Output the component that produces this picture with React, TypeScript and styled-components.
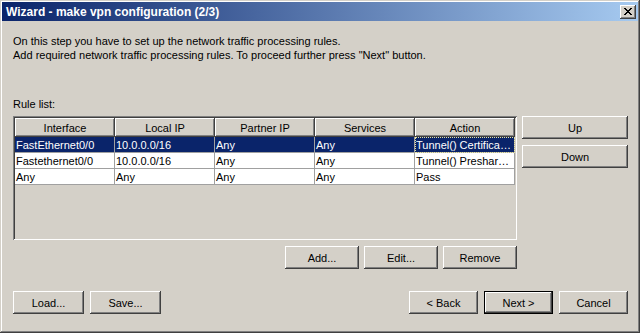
import React from "react";
import styled, { createGlobalStyle, css } from "styled-components";

const GlobalStyle = createGlobalStyle`
  html, body {
    margin: 0;
    padding: 0;
    background: #d4d0c8;
  }
  * {
    box-sizing: border-box;
  }
`;

const raised = css`
  box-shadow: inset -1px -1px #404040, inset 1px 1px #ffffff,
    inset -2px -2px #808080, inset 2px 2px #d4d0c8;
`;

const Window = styled.div`
  width: 640px;
  height: 333px;
  padding: 2px;
  background: #d4d0c8;
  font-family: "Liberation Sans", Arial, sans-serif;
  font-size: 11px;
  color: #000;
  display: flex;
  flex-direction: column;
  box-shadow: inset -1px -1px #404040, inset 1px 1px #d4d0c8,
    inset -2px -2px #808080, inset 2px 2px #ffffff;
`;

const TitleBar = styled.div`
  height: 19px;
  display: flex;
  align-items: center;
  justify-content: space-between;
  padding: 0 2px 0 4px;
  background: linear-gradient(90deg, #0a246a 0%, #a6caf0 100%);
`;

const Title = styled.span`
  color: #fff;
  font-weight: bold;
  font-size: 12px;
  white-space: nowrap;
`;

const CloseButton = styled.button`
  width: 16px;
  height: 14px;
  padding: 0;
  border: none;
  background: #d4d0c8;
  display: flex;
  align-items: center;
  justify-content: center;
  ${raised}
`;

const Body = styled.div`
  flex: 1;
  display: flex;
  flex-direction: column;
  padding: 13px 10px 0 11px;
`;

const Intro = styled.p`
  margin: 0;
  line-height: 14px;
`;

const RuleLabel = styled.div`
  margin-top: 35px;
  line-height: 14px;
`;

const MainRow = styled.div`
  margin-top: 5px;
  display: flex;
  gap: 5px;
`;

const TableColumn = styled.div`
  display: flex;
  flex-direction: column;
  width: 504px;
`;

const Grid = styled.div`
  height: 124px;
  padding: 2px;
  background: #d4d0c8;
  box-shadow: inset 1px 1px #808080, inset -1px -1px #ffffff,
    inset 2px 2px #404040, inset -2px -2px #d4d0c8;
  display: grid;
  grid-template-columns: repeat(5, 100px);
  grid-template-rows: 19px;
  grid-auto-rows: 16px;
  align-content: start;
`;

const HeadCell = styled.div`
  background: #d4d0c8;
  text-align: center;
  line-height: 20px;
  ${raised}
`;

const Cell = styled.div<{ $selected?: boolean; $focused?: boolean }>`
  background: ${(p) => (p.$selected ? "#0a246a" : "#ffffff")};
  color: ${(p) => (p.$selected ? "#ffffff" : "#000000")};
  border-right: 1px solid #a0a0a0;
  border-bottom: 1px solid #a0a0a0;
  padding: 1px 0 0 1px;
  line-height: 15px;
  white-space: nowrap;
  overflow: hidden;
  text-overflow: ellipsis;
  ${(p) =>
    p.$focused &&
    css`
      outline: 1px dotted #e8e4a0;
      outline-offset: -1px;
    `}
`;

const SideButtons = styled.div`
  display: flex;
  flex-direction: column;
  gap: 6px;
`;

const ButtonRow = styled.div<{ $align?: string }>`
  display: flex;
  justify-content: ${(p) => p.$align || "flex-end"};
  gap: 5px;
`;

const Button = styled.button<{ $w: number; $default?: boolean }>`
  width: ${(p) => p.$w}px;
  height: 23px;
  padding: 0;
  border: none;
  background: #d4d0c8;
  font-family: "Liberation Sans", Arial, sans-serif;
  font-size: 11px;
  color: #000;
  ${raised}
  ${(p) =>
    p.$default &&
    css`
      box-shadow: inset 0 0 0 1px #000000, inset -2px -2px #404040,
        inset 2px 2px #ffffff, inset -3px -3px #808080;
    `}
`;

const TableActions = styled(ButtonRow)`
  margin-top: 6px;
`;

const Footer = styled.div`
  margin-top: 22px;
  display: flex;
  justify-content: space-between;
`;

const FooterGroup = styled.div`
  display: flex;
  gap: 6px;
`;

const headers = ["Interface", "Local IP", "Partner IP", "Services", "Action"];

const rules = [
  ["FastEthernet0/0", "10.0.0.0/16", "Any", "Any", "Tunnel() Certifica…"],
  ["Fastethernet0/0", "10.0.0.0/16", "Any", "Any", "Tunnel() Preshar…"],
  ["Any", "Any", "Any", "Any", "Pass"],
];

const App = () => {
  const selected = 0;

  return (
    <>
      <GlobalStyle />
      <Window>
        <TitleBar>
          <Title>Wizard - make vpn configuration (2/3)</Title>
          <CloseButton aria-label="Close">
            <svg width="8" height="7" viewBox="0 0 8 7" shapeRendering="crispEdges">
              <path
                d="M0 0h2v1H0zM6 0h2v1H6zM1 1h2v1H1zM5 1h2v1H5zM2 2h4v1H2zM3 3h2v1H3zM2 4h4v1H2zM1 5h2v1H1zM5 5h2v1H5zM0 6h2v1H0zM6 6h2v1H6z"
                fill="#000"
              />
            </svg>
          </CloseButton>
        </TitleBar>
        <Body>
          <Intro>
            On this step you have to set up the network traffic processing rules.
            <br />
            Add required network traffic processing rules. To proceed further press "Next" button.
          </Intro>
          <RuleLabel>Rule list:</RuleLabel>
          <MainRow>
            <TableColumn>
              <Grid>
                {headers.map((h) => (
                  <HeadCell key={h}>{h}</HeadCell>
                ))}
                {rules.map((row, r) =>
                  row.map((value, c) => (
                    <Cell
                      key={`${r}-${c}`}
                      $selected={r === selected}
                      $focused={r === selected && c === row.length - 1}
                    >
                      {value}
                    </Cell>
                  ))
                )}
              </Grid>
              <TableActions>
                <Button $w={74}>Add...</Button>
                <Button $w={74}>Edit...</Button>
                <Button $w={74}>Remove</Button>
              </TableActions>
            </TableColumn>
            <SideButtons>
              <Button $w={106}>Up</Button>
              <Button $w={106}>Down</Button>
            </SideButtons>
          </MainRow>
          <Footer>
            <FooterGroup>
              <Button $w={71}>Load...</Button>
              <Button $w={71}>Save...</Button>
            </FooterGroup>
            <FooterGroup>
              <Button $w={69}>&lt; Back</Button>
              <Button $w={69} $default>
                Next &gt;
              </Button>
              <Button $w={69}>Cancel</Button>
            </FooterGroup>
          </Footer>
        </Body>
      </Window>
    </>
  );
};

export default App;
